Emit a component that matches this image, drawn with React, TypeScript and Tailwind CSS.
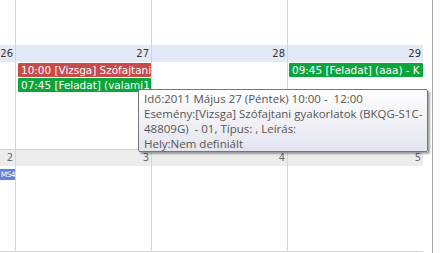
import React from 'react';

const cols = 'grid grid-cols-[15px_136px_136px_136px]';
const line = 'border-l border-[#c6d7f3]';
const evFont = "font-['DejaVu_Sans',sans-serif] text-[10px] leading-[14px]";

const Bar = ({ color, text }: { color: string; text: string }) => (
	<div
		className={`h-[14px] ${color} rounded-[1px] pl-[3px] overflow-hidden whitespace-nowrap text-white font-['DejaVu_Sans',sans-serif] text-[10.45px] leading-[14px]`}
	>
		{text}
	</div>
);

const App = () => {
	return (
		<div className="relative w-[440px] h-[253px] bg-white overflow-hidden flex">
			<div className="w-[423px] flex flex-col">
				{/* Previous week (tail) */}
				<div className={`${cols} h-[45px]`}>
					<div />
					<div className={line} />
					<div className={line} />
					<div className={line} />
				</div>

				{/* Week 26-29 */}
				<div className={`${cols} h-[104px]`}>
					{['26', '27', '28', '29'].map((d, i) => (
						<div key={d} className={`flex flex-col ${i > 0 ? line : ''}`}>
							<div
								className={`h-[17px] bg-[#e3eaf7] flex items-center justify-end pr-[2px] text-[#333] ${evFont}`}
							>
								{d}
							</div>
							{i === 1 && (
								<div className="flex flex-col gap-px pt-px pl-[2px]">
									<Bar color="bg-[#c84a4a]" text="10:00 [Vizsga] Szófajtani" />
									<Bar color="bg-[#0ca43c]" text="07:45 [Feladat] (valami1" />
								</div>
							)}
							{i === 3 && (
								<div className="flex flex-col pt-px pl-px">
									<Bar color="bg-[#0ca43c]" text="09:45 [Feladat] (aaa) - K" />
								</div>
							)}
						</div>
					))}
				</div>

				{/* Week 2-5 */}
				<div className={`${cols} h-[103px] border-y border-[#c6d7f3]`}>
					{['2', '3', '4', '5'].map((d, i) => (
						<div key={d} className={`flex flex-col ${i > 0 ? line : ''}`}>
							<div
								className={`h-[16px] bg-[#ececec] flex items-center justify-end pr-[2px] text-[#6a6a6a] ${evFont}`}
							>
								{d}
							</div>
							{i === 0 && (
								<div className="mt-[3px] h-[11px] bg-[#5b84d4] flex justify-end items-center overflow-hidden whitespace-nowrap text-white font-['DejaVu_Sans',sans-serif] text-[7.5px] leading-[11px] tracking-[-0.6px]">
									MS4
								</div>
							)}
						</div>
					))}
				</div>
			</div>
			<div className="w-[9px]" />
			<div className="w-px bg-[#a9a9a9]" />

			{/* Tooltip */}
			<div className="absolute left-[138px] top-[89px] w-[290px] h-[63px] border border-[#767676] rounded-[2px] bg-linear-to-b from-white to-[#e3e4ee] shadow-[2px_2px_2px_rgba(0,0,0,0.35)] pl-[5px] pt-px text-[#555] font-['Open_Sans',sans-serif] text-[11.5px] leading-[15px] whitespace-nowrap">
				<div>Idő:2011 Május 27 (Péntek) 10:00 -&nbsp; 12:00</div>
				<div>Esemény:[Vizsga] Szófajtani gyakorlatok (BKQG-S1C-</div>
				<div>48809G)&nbsp; - 01, Típus: , Leírás:</div>
				<div>Hely:Nem definiált</div>
			</div>
		</div>
	);
};

export default App;
